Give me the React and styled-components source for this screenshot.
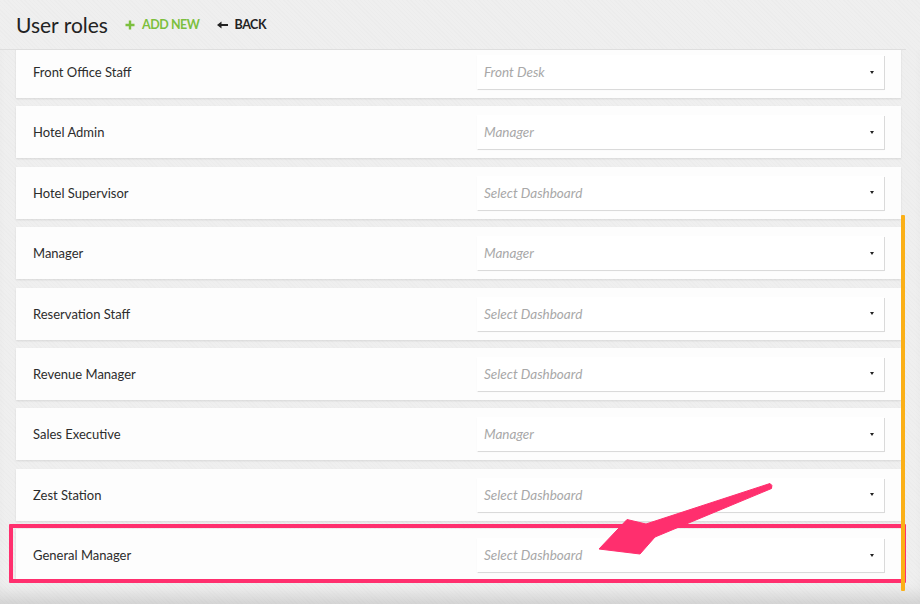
import styled, { createGlobalStyle } from "styled-components"

const GlobalStyle = createGlobalStyle`
    html, body {
        margin: 0;
        padding: 0;
        background: #efefef;
    }
    * {
        box-sizing: border-box;
    }
`;

const Page = styled.div`
    position: relative;
    width: 920px;
    height: 604px;
    overflow: hidden;
    font-family: Lato, "Open Sans", sans-serif;
    background-color: #efefef;
    background-image: repeating-linear-gradient(45deg, rgba(0,0,0,0.012) 0px, rgba(0,0,0,0.012) 1px, transparent 1px, transparent 3px);
    display: flex;
    flex-direction: column;
`;

const Header = styled.div`
    position: relative;
    z-index: 2;
    height: 50px;
    flex-shrink: 0;
    display: flex;
    align-items: center;
    padding: 0 0 0 16px;
    border-bottom: 1px solid #dedede;
    width: 906px;
`;

const Title = styled.h1`
    margin: 0 17px 0 0;
    font-size: 21px;
    font-weight: 400;
    color: #222;
`;

const Action = styled.span`
    display: flex;
    align-items: center;
    gap: 7px;
    margin-right: 17px;
    font-size: 12.5px;
    font-weight: 700;
    letter-spacing: -0.45px;
    color: ${props => props.color || "#222"};
`;

const Content = styled.div`
    position: relative;
    flex: 1;
    overflow: hidden;
    box-shadow: inset 0 -18px 16px -10px rgba(0,0,0,0.13);
`;

const List = styled.div`
    margin-top: -4px;
    padding: 0 19px 0 16px;
    display: flex;
    flex-direction: column;
    gap: 8.4px;
`;

const Row = styled.div`
    position: relative;
    height: 52px;
    display: flex;
    align-items: center;
    padding: 0 17px;
    background: #fdfdfd;
    box-shadow: 0 1px 2px rgba(0,0,0,0.1);

    ${props => props.highlight && `
        &::after {
            content: "";
            position: absolute;
            top: -5px;
            left: -7px;
            right: -5px;
            bottom: -2px;
            border: 4px solid #ff2f6e;
            border-radius: 1px;
        }
    `}
`;

const Label = styled.span`
    flex: 1;
    font-size: 13px;
    color: #2c2c2c;
`;

const Select = styled.div`
    width: 407px;
    height: 34px;
    display: flex;
    align-items: center;
    justify-content: space-between;
    padding: 0 10px 0 7px;
    background: #fff;
    box-shadow: 1px 1px 0 #dadada, 0 1px 1px rgba(0,0,0,0.05);
`;

const Placeholder = styled.span`
    font-size: 13.5px;
    font-style: italic;
    color: #a8a8a8;
`;

const Caret = styled.span`
    width: 0;
    height: 0;
    border-left: 2.5px solid transparent;
    border-right: 2.5px solid transparent;
    border-top: 3.5px solid #222;
`;

const ScrollBar = styled.div`
    position: absolute;
    right: 15px;
    top: 165px;
    width: 4px;
    height: 376px;
    background: #fbb017;
    border-radius: 1px;
`;

const Pointer = styled.svg`
    position: absolute;
    left: 0;
    top: 0;
    z-index: 3;
    pointer-events: none;
`;

const roles = [
    ["Front Office Staff", "Front Desk"],
    ["Hotel Admin", "Manager"],
    ["Hotel Supervisor", "Select Dashboard"],
    ["Manager", "Manager"],
    ["Reservation Staff", "Select Dashboard"],
    ["Revenue Manager", "Select Dashboard"],
    ["Sales Executive", "Manager"],
    ["Zest Station", "Select Dashboard"],
    ["General Manager", "Select Dashboard"],
];

const App = () => {
  return (
    <Page>
        <GlobalStyle />
        <Header>
            <Title>User roles</Title>
            <Action color="#7cbf3e">
                <svg width="10" height="10" viewBox="0 0 10 10">
                    <path d="M5 0.5v9M0.5 5h9" stroke="#7cbf3e" strokeWidth="2.4" />
                </svg>
                ADD NEW
            </Action>
            <Action>
                <svg width="11" height="8" viewBox="0 0 11 8">
                    <path d="M0 4L4.5 0.5V7.5Z" fill="#222" />
                    <path d="M4 4h7" stroke="#222" strokeWidth="2" />
                </svg>
                BACK
            </Action>
        </Header>
        <Content>
            <List>
                {roles.map(([name, dash], i) => (
                    <Row key={name} highlight={i === roles.length - 1 ? 1 : 0}>
                        <Label>{name}</Label>
                        <Select>
                            <Placeholder>{dash}</Placeholder>
                            <Caret />
                        </Select>
                    </Row>
                ))}
            </List>
            <ScrollBar />
        </Content>
        <Pointer width="920" height="604" viewBox="0 0 920 604">
            <path
                d="M770 483.5 Q773 485 771.5 488.5 L655 537 L640 554 L599 549 L627 519.5 L646 524 Z"
                fill="#ff2f6e"
                stroke="#ff2f6e"
                strokeWidth="1"
                strokeLinejoin="round"
            />
        </Pointer>
    </Page>
  )
}

export default App
